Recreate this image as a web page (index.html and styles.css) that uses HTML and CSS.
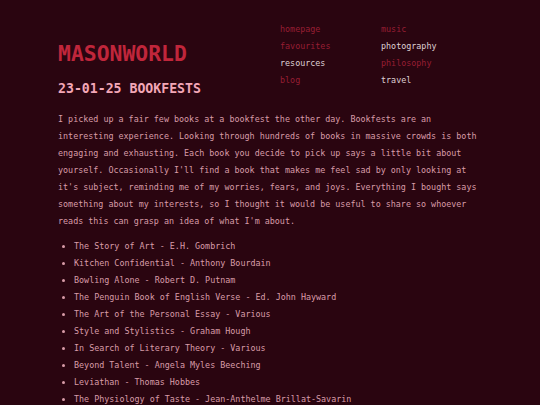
FILE: index.html
```html
<!DOCTYPE html>
<html lang="en">
<head>
<meta charset="utf-8">
<title>masonworld - bookfests</title>
<link rel="stylesheet" href="styles.css">
</head>
<body>
<div class="page">
  <header class="header">
    <div class="brand">
      <h1 class="site-title">MASONWORLD</h1>
      <h2 class="post-title">23-01-25 BOOKFESTS</h2>
    </div>
    <nav class="nav">
      <a class="nav-link" href="#">homepage</a>
      <a class="nav-link" href="#">music</a>
      <a class="nav-link" href="#">favourites</a>
      <a class="nav-link light" href="#">photography</a>
      <a class="nav-link light" href="#">resources</a>
      <a class="nav-link" href="#">philosophy</a>
      <a class="nav-link" href="#">blog</a>
      <a class="nav-link light" href="#">travel</a>
    </nav>
  </header>
  <main class="post">
    <p class="text">I picked up a fair few books at a bookfest the other day. Bookfests are an interesting experience. Looking through hundreds of books in massive crowds is both engaging and exhausting. Each book you decide to pick up says a little bit about yourself. Occasionally I'll find a book that makes me feel sad by only looking at it's subject, reminding me of my worries, fears, and joys. Everything I bought says something about my interests, so I thought it would be useful to share so whoever reads this can grasp an idea of what I'm about.</p>
    <ul class="books">
      <li>The Story of Art - E.H. Gombrich</li>
      <li>Kitchen Confidential - Anthony Bourdain</li>
      <li>Bowling Alone - Robert D. Putnam</li>
      <li>The Penguin Book of English Verse - Ed. John Hayward</li>
      <li>The Art of the Personal Essay - Various</li>
      <li>Style and Stylistics - Graham Hough</li>
      <li>In Search of Literary Theory - Various</li>
      <li>Beyond Talent - Angela Myles Beeching</li>
      <li>Leviathan - Thomas Hobbes</li>
      <li>The Physiology of Taste - Jean-Anthelme Brillat-Savarin</li>
    </ul>
  </main>
</div>
</body>
</html>
```
FILE: styles.css
```css
html, body {
  margin: 0;
  padding: 0;
  background: #2a0510;
}
body {
  font-family: "DejaVu Sans Mono", "Liberation Mono", monospace;
  font-size: 8.4px;
  line-height: 17px;
  color: #d89ca8;
}
.page {
  width: 424px;
  margin: 0 auto;
  padding-top: 19.5px;
}
.header {
  display: flex;
  justify-content: space-between;
  align-items: flex-start;
}
.site-title {
  margin: 21.5px 0 0;
  font-size: 21.4px;
  line-height: 26px;
  font-weight: bold;
  color: #c0263b;
}
.post-title {
  margin: 12.5px 0 0;
  font-size: 13.2px;
  line-height: 17px;
  font-weight: bold;
  color: #f3a7b7;
}
.nav {
  display: grid;
  grid-template-columns: 101px 101px;
  padding-top: 1px;
}
.nav-link {
  color: #971e33;
  text-decoration: none;
  line-height: 17px;
}
.nav-link.light {
  color: #ded0d4;
}
.post {
  padding-top: 14.5px;
}
.text {
  margin: 0 0 8.4px;
}
.books {
  margin: 0;
  padding-left: 16px;
}
.books li {
  line-height: 17px;
}
```
